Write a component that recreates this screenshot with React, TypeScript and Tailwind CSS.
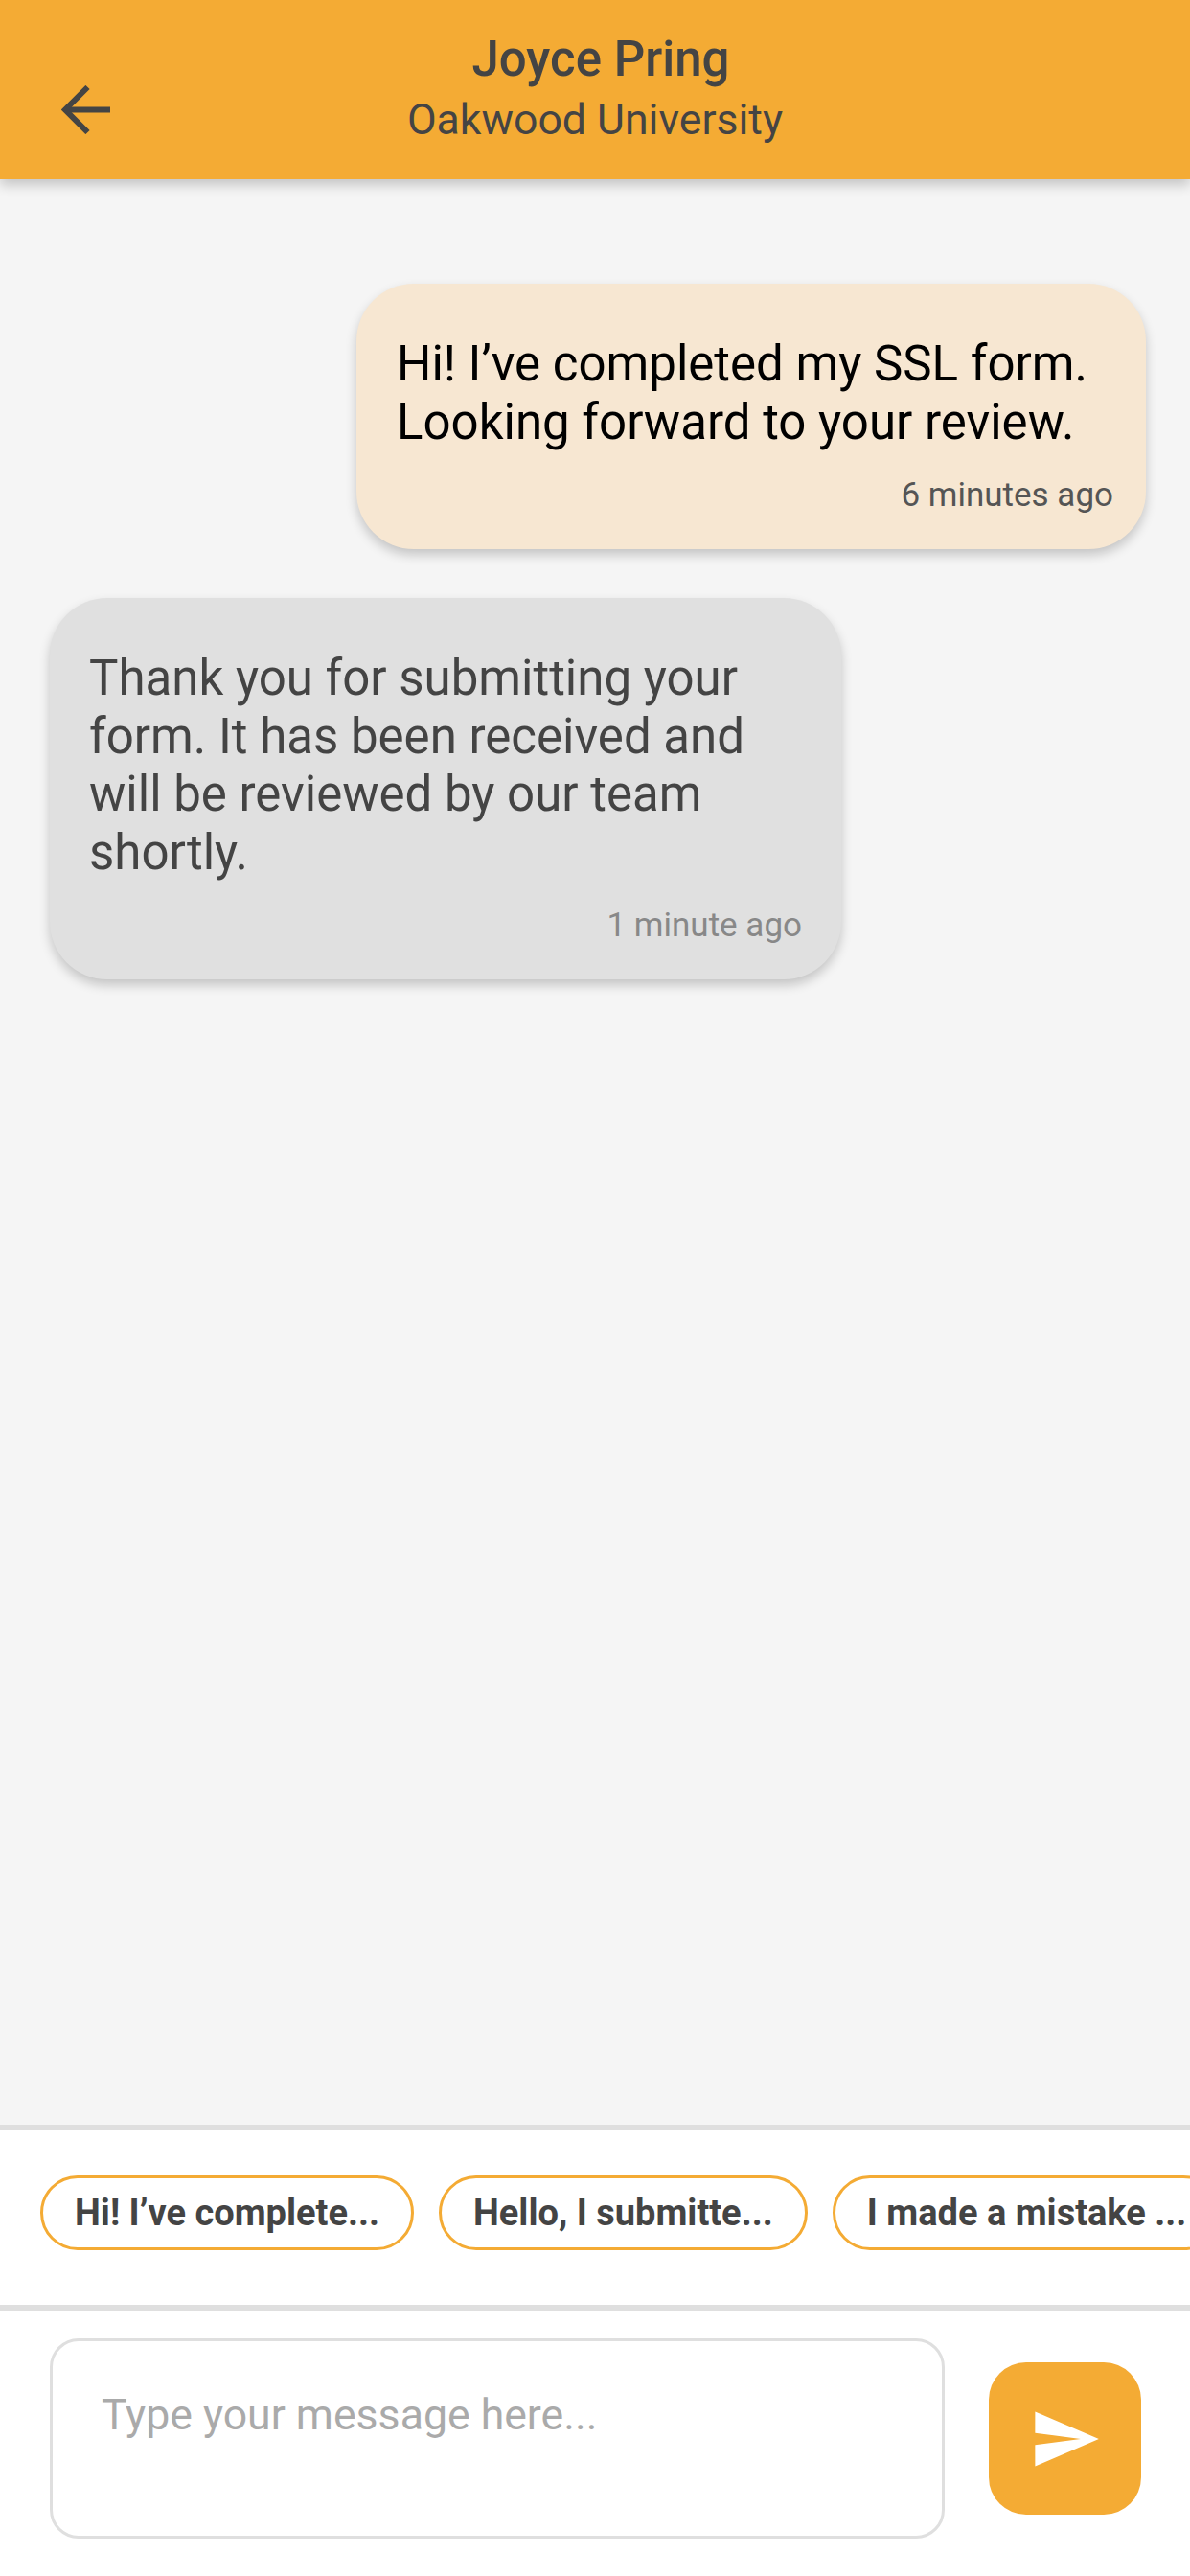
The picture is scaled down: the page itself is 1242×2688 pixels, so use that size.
const chips = ["Hi! I’ve complete...", "Hello, I submitte...", "I made a mistake ..."];

function App() {
  return (
    <div className="flex h-[2688px] w-[1242px] flex-col overflow-hidden bg-[#f5f5f5] font-['Roboto',sans-serif]">
      <header className="relative z-10 grid h-[187px] shrink-0 grid-cols-[186px_1fr_186px] bg-[#f4ab34] shadow-[0_6px_12px_rgba(0,0,0,0.2)]">
        <div className="pl-[64px] pt-[89px]">
          <svg width="51" height="51" viewBox="0 0 51 51" fill="none" stroke="#444444" strokeWidth="6">
            <path d="M51 25.5H5" />
            <path d="M27.5 2L4 25.5L27.5 49" />
          </svg>
        </div>
        <div className="flex flex-col items-center pt-[32px] text-[#444444]">
          <h1 className="pl-[12px] text-[51px] leading-[60px] font-medium">Joyce Pring</h1>
          <p className="mt-[3px] text-[44.6px] leading-[60px]">Oakwood University</p>
        </div>
      </header>

      <main className="flex flex-1 flex-col gap-[51px] pt-[109px] pr-[46px] pl-[52px]">
        <div className="w-[824px] self-end rounded-[60px] bg-[#f7e7d2] pt-[54px] pr-[34px] pb-[36px] pl-[42px] shadow-[0_6px_12px_rgba(0,0,0,0.2)]">
          <p className="text-[51px] leading-[60.6px] text-black">
            Hi! I’ve completed my SSL form.
            <br />
            Looking forward to your review.
          </p>
          <p className="mt-[26px] text-right text-[35px] leading-[40px] text-[#555555]">6 minutes ago</p>
        </div>
        <div className="w-[826px] rounded-[60px] bg-[#e0e0e0] pt-[54px] pr-[41px] pb-[36px] pl-[41px] shadow-[0_6px_12px_rgba(0,0,0,0.2)]">
          <p className="text-[51px] leading-[60.6px] text-[#444444]">
            Thank you for submitting your
            <br />
            form. It has been received and
            <br />
            will be reviewed by our team
            <br />
            shortly.
          </p>
          <p className="mt-[25px] text-right text-[35px] leading-[40px] text-[#888888]">1 minute ago</p>
        </div>
      </main>

      <div className="flex h-[194px] shrink-0 items-start gap-[26px] overflow-hidden border-y-[6px] border-[#dfdfdf] bg-white pt-[47px] pl-[42px]">
        {chips.map((chip) => (
          <button
            key={chip}
            className="h-[78px] shrink-0 rounded-[39px] border-[3px] border-[#f4ab34] bg-white px-[33px] text-[38px] font-bold whitespace-nowrap text-[#444444]"
          >
            {chip}
          </button>
        ))}
      </div>

      <div className="flex h-[277px] shrink-0 items-start bg-white pt-[29px] pl-[52px]">
        <div className="h-[209px] w-[934px] rounded-[30px] border-[3px] border-[#dfdfdf] px-[51px] pt-[52px] text-[44.6px] leading-[50px] text-[#aaaaaa]">
          Type your message here...
        </div>
        <button className="mt-[25px] ml-[46px] flex h-[159px] w-[159px] items-center justify-center rounded-[39px] bg-[#f4ab34]">
          <svg width="76" height="76" viewBox="0 0 24 24" fill="#ffffff">
            <path d="M2.01 21L23 12 2.01 3 2 10l15 2-15 2z" />
          </svg>
        </button>
      </div>
    </div>
  );
}

export default App;
